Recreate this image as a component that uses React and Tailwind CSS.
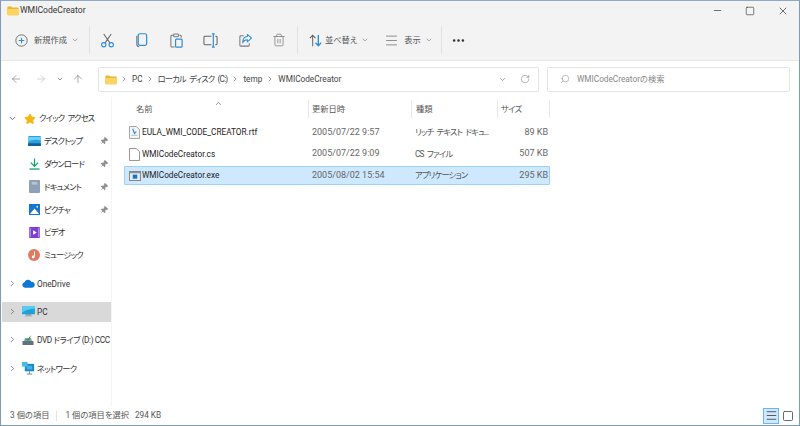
import { ArrowLeft, ArrowRight, ArrowUp, ChevronDown, ChevronRight, ChevronUp, RotateCw, Search, Minus, Square, X, Trash2, Menu, MoreHorizontal, Star, Pin } from 'lucide-react'

function FolderIcon({ className }) {
  return (
    <svg viewBox="0 0 16 14" className={className}>
      <path d="M0.5 2.5 a1 1 0 0 1 1-1 h4 l1.5 1.5 h7.5 a1 1 0 0 1 1 1 v8 a1 1 0 0 1-1 1 h-13 a1 1 0 0 1-1-1z" fill="#eeb52f" />
      <path d="M0.5 5 h15 v7.5 a1 1 0 0 1-1 1 h-13 a1 1 0 0 1-1-1z" fill="#fcd462" />
    </svg>
  )
}

function CutIcon() {
  return (
    <svg viewBox="0 0 16 16" className="w-[15px] h-[15px]" fill="none">
      <path d="M4 1 L10.5 10.5 M12 1 L5.5 10.5" stroke="#666" strokeWidth="1.1" />
      <circle cx="4" cy="12.5" r="2.3" stroke="#2f8fd8" strokeWidth="1.2" />
      <circle cx="12" cy="12.5" r="2.3" stroke="#2f8fd8" strokeWidth="1.2" />
    </svg>
  )
}

function CopyIcon() {
  return (
    <svg viewBox="0 0 16 16" className="w-[15px] h-[15px]" fill="none">
      <path d="M3 3 V12 a2.5 2.5 0 0 0 2.5 2.5" stroke="#777" strokeWidth="1.2" />
      <rect x="4.5" y="0.8" width="9" height="12.5" rx="2" stroke="#2f8fd8" strokeWidth="1.3" />
    </svg>
  )
}

function PasteIcon() {
  return (
    <svg viewBox="0 0 16 16" className="w-[15px] h-[15px]" fill="none">
      <path d="M5 2.5 H3 a1 1 0 0 0-1 1 V14 a1 1 0 0 0 1 1 h3 M11 2.5 h1 a1 1 0 0 1 1 1 V5" stroke="#777" strokeWidth="1.1" />
      <rect x="5" y="1" width="5" height="3" rx="0.8" stroke="#777" strokeWidth="1.1" />
      <rect x="7" y="6.5" width="7" height="8.5" rx="1" stroke="#2f8fd8" strokeWidth="1.3" />
    </svg>
  )
}

function RenameIcon() {
  return (
    <svg viewBox="0 0 16 16" className="w-[15px] h-[15px]" fill="none">
      <path d="M9 3.5 H2 a1 1 0 0 0-1 1 v7 a1 1 0 0 0 1 1 h7" stroke="#666" strokeWidth="1.1" />
      <path d="M13 3.5 h1 a1 1 0 0 1 1 1 v7 a1 1 0 0 1-1 1 h-1" stroke="#666" strokeWidth="1.1" />
      <path d="M11 1 v14 M9.5 1 h3 M9.5 15 h3" stroke="#2f8fd8" strokeWidth="1.3" />
    </svg>
  )
}

function ShareIcon() {
  return (
    <svg viewBox="0 0 16 16" className="w-[15px] h-[15px]" fill="none">
      <path d="M6 3 H3 a1 1 0 0 0-1 1 v9 a1 1 0 0 0 1 1 h8 a1 1 0 0 0 1-1 v-2" stroke="#777" strokeWidth="1.1" />
      <path d="M10 1.5 L14.5 5.5 L10 9.5 V7.3 C7.5 7.3 6 8.3 5 10.5 C5 6.5 7 4 10 3.8z" stroke="#2f8fd8" strokeWidth="1.1" strokeLinejoin="round" />
    </svg>
  )
}

function SortIcon() {
  return (
    <svg viewBox="0 0 16 16" className="w-[15px] h-[15px]" fill="none">
      <path d="M5 14 V2.5 M2 5.5 L5 2.5 L8 5.5" stroke="#666" strokeWidth="1.1" />
      <path d="M11 2 V13.5 M8 10.5 L11 13.5 L14 10.5" stroke="#2f8fd8" strokeWidth="1.5" />
    </svg>
  )
}

function CircleNew() {
  return (
    <svg viewBox="0 0 16 16" className="w-[13px] h-[13px]" fill="none">
      <circle cx="8" cy="8" r="7" stroke="#666" strokeWidth="1.1" />
      <path d="M8 4.5 v7 M4.5 8 h7" stroke="#2f8fd8" strokeWidth="1.4" />
    </svg>
  )
}

function ToolSep() {
  return <div className="w-px h-[28px] bg-[#e2e2e2]" />
}

function Toolbar() {
  return (
    <div className="h-[40px] flex items-center pl-[14px] text-[#555]">
      <CircleNew />
      <span className="ml-[6px] whitespace-nowrap">新規作成</span>
      <ChevronDown size={8} className="ml-[4px] text-[#888]" />
      <div className="ml-[10px]"><ToolSep /></div>
      <div className="ml-[10px] flex items-center gap-[19.4px]">
        <CutIcon />
        <CopyIcon />
        <PasteIcon />
        <RenameIcon />
        <ShareIcon />
        <Trash2 size={14} strokeWidth={1.1} className="text-[#666]" />
      </div>
      <div className="ml-[11px]"><ToolSep /></div>
      <div className="ml-[10px]"><SortIcon /></div>
      <span className="ml-[2px] whitespace-nowrap">並べ替え</span>
      <ChevronDown size={8} className="ml-[4px] text-[#888]" />
      <Menu size={15} strokeWidth={1} className="ml-[15px] text-[#555]" />
      <span className="ml-[5px] whitespace-nowrap">表示</span>
      <ChevronDown size={8} className="ml-[4px] text-[#888]" />
      <div className="ml-[8px]"><ToolSep /></div>
      <MoreHorizontal size={15} strokeWidth={2.2} className="ml-[9px] text-[#333]" />
    </div>
  )
}

function AddressBar() {
  return (
    <div className="h-[37px] bg-white border-t border-[#e8e8e8] flex items-center text-[#444]">
      <div className="w-[97px] pl-[9px] flex items-center shrink-0">
        <ArrowLeft size={12} strokeWidth={1} className="text-[#555]" />
        <ArrowRight size={12} strokeWidth={1} className="ml-[13px] text-[#aaa]" />
        <ChevronDown size={8} className="ml-[9px] text-[#555]" />
        <ArrowUp size={12} strokeWidth={1} className="ml-[8px] text-[#555]" />
      </div>
      <div className="w-[441px] h-[25px] border border-[#e5e5e5] rounded-[2px] flex items-center pl-[6px] shrink-0">
        <FolderIcon className="w-[12px] h-[11px]" />
        <ChevronRight size={8} className="ml-[3px] text-[#666]" />
        <span className="ml-[4px]">PC</span>
        <ChevronRight size={8} className="ml-[3px] text-[#666]" />
        <span className="ml-[4px] tracking-[-0.8px] [word-spacing:2px]">ローカル ディスク (C:)</span>
        <ChevronRight size={8} className="ml-[4px] text-[#666]" />
        <span className="ml-[4px]">temp</span>
        <ChevronRight size={8} className="ml-[4px] text-[#666]" />
        <span className="ml-[4px]">WMICodeCreator</span>
        <ChevronDown size={9} className="ml-auto text-[#888]" />
        <RotateCw size={10} strokeWidth={1.1} className="ml-[13px] mr-[8px] text-[#666]" />
      </div>
      <div className="w-[243px] h-[25px] ml-[8px] border border-[#e5e5e5] rounded-[2px] flex items-center pl-[12px] text-[#888]">
        <Search size={10} strokeWidth={1.1} className="-scale-x-100 text-[#777]" />
        <span className="ml-[7px]">WMICodeCreatorの検索</span>
      </div>
    </div>
  )
}

function DesktopIcon() {
  return (
    <svg viewBox="0 0 14 11" className="w-[13px] h-[10px]">
      <rect width="14" height="11" rx="1" fill="#2aa1de" />
      <rect y="8" width="14" height="3" fill="#125f9c" />
      <path d="M0 6 Q7 3 14 5 V1 H0z" fill="#6dcdf2" />
    </svg>
  )
}

function DownloadIcon() {
  return (
    <svg viewBox="0 0 12 13" className="w-[11px] h-[12px]" fill="none">
      <path d="M6 0.5 V8.5 M2 5 L6 9 L10 5" stroke="#15a06b" strokeWidth="1.3" />
      <path d="M0.5 12 H11.5" stroke="#15a06b" strokeWidth="1.4" />
    </svg>
  )
}

function DocsIcon() {
  return (
    <svg viewBox="0 0 12 14" className="w-[11px] h-[13px]">
      <rect width="12" height="14" rx="1" fill="#8da0b6" />
      <rect x="3" y="2" width="6" height="3" fill="#b6c4d3" />
    </svg>
  )
}

function PicturesIcon() {
  return (
    <svg viewBox="0 0 12 12" className="w-[11px] h-[11px]">
      <rect width="12" height="12" fill="#1478cf" />
      <path d="M1 11 L6 5 L11 11z" fill="#fff" />
      <circle cx="9" cy="3" r="1" fill="#cde6fa" />
    </svg>
  )
}

function VideoIcon() {
  return (
    <svg viewBox="0 0 12 12" className="w-[11px] h-[11px]">
      <rect width="12" height="12" rx="1" fill="#7a3fd0" />
      <rect x="0.5" y="1" width="1.5" height="10" fill="#b695ec" />
      <rect x="10" y="1" width="1.5" height="10" fill="#b695ec" />
      <path d="M4.5 3.5 L8.5 6 L4.5 8.5z" fill="#fff" />
    </svg>
  )
}

function MusicIcon() {
  return (
    <svg viewBox="0 0 12 12" className="w-[12px] h-[12px]">
      <circle cx="6" cy="6" r="6" fill="#dd7a5f" />
      <path d="M6.5 2.5 V7.5" stroke="#fff" strokeWidth="1" />
      <circle cx="5.2" cy="8" r="1.4" fill="#fff" />
    </svg>
  )
}

function CloudIcon() {
  return (
    <svg viewBox="0 0 14 9" className="w-[13px] h-[9px]">
      <path d="M3 9 a3 3 0 0 1-0.4-5.9 A4 4 0 0 1 10 2.6 a3.2 3.2 0 0 1 1 6.4z" fill="#0f78d4" />
    </svg>
  )
}

function MonitorIcon() {
  return (
    <svg viewBox="0 0 14 12" className="w-[13px] h-[11px]">
      <rect width="14" height="9" fill="#1aa3d9" />
      <path d="M0 0 H14 V3 Q6 3 0 7z" fill="#5cc9ee" />
      <rect x="4" y="9" width="6" height="1.5" fill="#7d8d99" />
      <rect x="3" y="10.5" width="8" height="1" fill="#a8b4bd" />
    </svg>
  )
}

function DvdIcon() {
  return (
    <svg viewBox="0 0 12 12" className="w-[12px] h-[12px]">
      <rect x="0.5" y="7" width="11" height="4" fill="#5f7182" />
      <path d="M2 7 L3 4 H9 L10 7z" fill="#8ea2b3" />
      <path d="M5 6 L9 1 L7.5 6z" fill="#38a84a" />
      <path d="M3 5 H8 L6 7.5z" fill="#38a84a" />
    </svg>
  )
}

function NetworkIcon() {
  return (
    <svg viewBox="0 0 14 14" className="w-[13px] h-[13px]">
      <rect x="3" y="2" width="10" height="8" fill="#1787c7" />
      <rect x="5" y="4" width="6" height="4" fill="#3fb3e2" />
      <rect x="0" y="0" width="6" height="5" fill="#44bde6" />
      <path d="M8 10 V13 M5 13 H11" stroke="#6f8797" strokeWidth="1" />
    </svg>
  )
}

function Sidebar() {
  const quick = [
    { icon: <DesktopIcon />, label: 'デスクトップ', pin: true },
    { icon: <DownloadIcon />, label: 'ダウンロード', pin: true },
    { icon: <DocsIcon />, label: 'ドキュメント', pin: true },
    { icon: <PicturesIcon />, label: 'ピクチャ', pin: true },
    { icon: <VideoIcon />, label: 'ビデオ' },
    { icon: <MusicIcon />, label: 'ミュージック' },
  ]
  const roots = [
    { icon: <CloudIcon />, label: 'OneDrive', h: 'h-[20px] mt-[7px]' },
    { icon: <MonitorIcon />, label: 'PC', h: 'h-[20px] mt-[8px] bg-[#d9d9d9]' },
    { icon: <DvdIcon />, label: 'DVD ドライブ (D:) CCC', h: 'h-[20px] mt-[8px] tracking-[-0.4px]' },
    { icon: <NetworkIcon />, label: 'ネットワーク', h: 'h-[20px] mt-[9px] tracking-[-0.7px]' },
  ]
  return (
    <aside className="w-[111px] shrink-0 border-r border-[#f4f4f4] text-[#333] pt-[10px] pl-px overflow-hidden">
      <div className="h-[23px] flex items-center pl-[6px] whitespace-nowrap">
        <ChevronDown size={9} className="shrink-0 text-[#444]" />
        <Star size={12} className="ml-[7px] shrink-0 text-[#f5b60f] fill-[#f5b60f]" />
        <span className="ml-[3px] tracking-[-0.8px] [word-spacing:2px]">クイック アクセス</span>
      </div>
      {quick.map((q) => (
        <div key={q.label} className="h-[22.8px] flex items-center whitespace-nowrap">
          <div className="ml-[25px] w-[14px] flex justify-center">{q.icon}</div>
          <span className="ml-[3px] tracking-[-0.8px]">{q.label}</span>
          {q.pin && <Pin size={8} className="ml-auto mr-[3px] rotate-45 text-[#8a8a8a] fill-[#8a8a8a]" />}
        </div>
      ))}
      {roots.map((r) => (
        <div key={r.label} className={`flex items-center pl-[6px] whitespace-nowrap ${r.h}`}>
          <ChevronRight size={9} className="shrink-0 text-[#666]" />
          <div className="ml-[4px] w-[14px] shrink-0 flex justify-center">{r.icon}</div>
          <span className="ml-[2px]">{r.label}</span>
        </div>
      ))}
    </aside>
  )
}

function RtfIcon() {
  return (
    <svg viewBox="0 0 12 14" className="w-[11px] h-[13px]" fill="none">
      <path d="M0.5 0.5 H8 L11.5 4 V13.5 H0.5z" fill="#f4f6f8" stroke="#9a9a9a" />
      <path d="M4 3 L6 8 L8 6" stroke="#3f8fd2" strokeWidth="1.4" />
      <path d="M2.5 10 H9.5" stroke="#a9b6c2" />
    </svg>
  )
}

function BlankIcon() {
  return (
    <svg viewBox="0 0 12 14" className="w-[11px] h-[13px]" fill="none">
      <path d="M0.5 0.5 H8 L11.5 4 V13.5 H0.5z" fill="#fff" stroke="#8a8a8a" />
    </svg>
  )
}

function ExeIcon() {
  return (
    <svg viewBox="0 0 13 11" className="w-[12px] h-[10px]">
      <rect x="0.5" y="0.5" width="12" height="10" fill="#e9eef2" stroke="#7c7c7c" />
      <rect x="1" y="1" width="11" height="1.5" fill="#8a949c" />
      <rect x="4" y="4" width="5" height="4.5" fill="#1478cf" />
    </svg>
  )
}

const columns = 'grid grid-cols-[184px_103px_86px_53px] items-center'

function FileRow({ icon, name, date, type, size, selected }) {
  return (
    <div className={`${columns} h-[19px] mb-[2.5px] border rounded-[1px] ${selected ? 'bg-[#cde8ff] border-[#99d1ff]' : 'border-transparent'}`}>
      <div className="flex items-center pl-[3px] text-[#222]">
        <div className="w-[13px] flex justify-center">{icon}</div>
        <span className="ml-px">{name}</span>
      </div>
      <span className="pl-[3px] text-[9px] text-[#666]">{date}</span>
      <span className="pl-[3px] text-[#555] whitespace-nowrap tracking-[-0.8px] [word-spacing:2px]">{type}</span>
      <span className="pr-[3px] text-right text-[9px] text-[#666]">{size}</span>
    </div>
  )
}

function FileList() {
  return (
    <main className="flex-1 relative pl-[12px]">
      <ChevronUp size={9} className="absolute left-[102px] top-[2px] text-[#777]" />
      <div className={`${columns} h-[24px] text-[#555]`}>
        <span className="pl-[12px]">名前</span>
        <span className="pl-[3px] h-[18px] leading-[18px] border-l border-[#e8e8e8]">更新日時</span>
        <span className="pl-[4px] h-[18px] leading-[18px] border-l border-[#e8e8e8]">種類</span>
        <span className="pl-[3px] h-[18px] leading-[18px] border-x border-[#e8e8e8] tracking-[-0.7px]">サイズ</span>
      </div>
      <div className="w-[426px] pt-[2px]">
        <FileRow icon={<RtfIcon />} name="EULA_WMI_CODE_CREATOR.rtf" date="2005/07/22 9:57" type="リッチ テキスト ドキュ..." size="89 KB" />
        <FileRow icon={<BlankIcon />} name="WMICodeCreator.cs" date="2005/07/22 9:09" type="CS ファイル" size="507 KB" />
        <FileRow icon={<ExeIcon />} name="WMICodeCreator.exe" date="2005/08/02 15:54" type="アプリケーション" size="295 KB" selected />
      </div>
    </main>
  )
}

function StatusBar() {
  return (
    <div className="h-[19px] flex items-center pl-[9px] text-[#555]">
      <span>3 個の項目</span>
      <div className="ml-[7px] w-px h-[10px] bg-[#e4e4e4]" />
      <span className="ml-[8px]">1 個の項目を選択</span>
      <span className="ml-[6px]">294 KB</span>
      <div className="ml-auto mr-[3px] flex items-center">
        <div className="w-[16px] h-[16px] bg-[#cde8ff] border border-[#66b8ee] flex items-center justify-center">
          <Menu size={13} strokeWidth={1.6} className="text-[#444]" />
        </div>
        <div className="w-[16px] h-[16px] ml-px flex items-center justify-center">
          <Square size={12} strokeWidth={1.6} className="text-[#444]" />
        </div>
      </div>
    </div>
  )
}

export default function App() {
  return (
    <div className={'w-[800px] h-[426px] overflow-hidden bg-white flex flex-col border border-[#7e9ab5] border-t-[#8fa9c2] text-[8.25px] font-["Roboto","Noto_Sans_CJK_JP",sans-serif] [font-feature-settings:"palt"]'}>
      <div className="bg-[#f3f3f3] h-[59px] shrink-0">
        <div className="h-[19px] flex items-center pl-[6px] text-[#333]">
          <FolderIcon className="w-[12px] h-[11px]" />
          <span className="ml-[1px] text-[8.6px]">WMICodeCreator</span>
          <div className="ml-auto flex items-center gap-[22px] pr-[10px] text-[#333]">
            <Minus size={11} strokeWidth={1.5} />
            <Square size={10} strokeWidth={1.5} />
            <X size={12} strokeWidth={1.4} />
          </div>
        </div>
        <Toolbar />
      </div>
      <AddressBar />
      <div className="flex-1 flex min-h-0">
        <Sidebar />
        <FileList />
      </div>
      <StatusBar />
    </div>
  )
}
